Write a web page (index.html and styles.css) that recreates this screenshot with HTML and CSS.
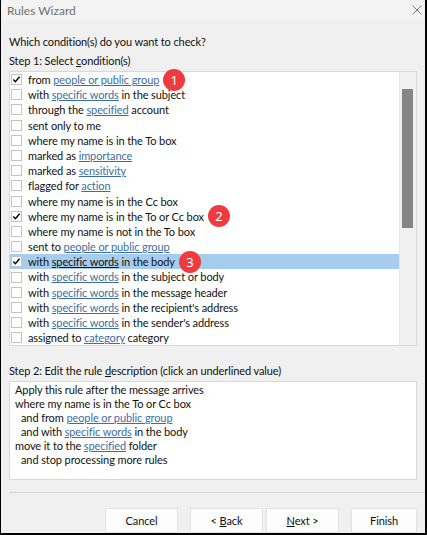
FILE: index.html
```html
<!DOCTYPE html>
<html lang="en">
<head>
    <meta charset="UTF-8">
    <meta name="viewport" content="width=device-width, initial-scale=1.0">
    <title>Rules Wizard</title>
    <link rel="stylesheet" href="styles.css">
</head>
<body>
    <div class="window">
        <div class="titlebar">
            <span class="title">Rules Wizard</span>
            <svg class="close" width="10" height="10" viewBox="0 0 10 10">
                <path d="M0.5 0.5 L9.5 9.5 M9.5 0.5 L0.5 9.5" stroke="#7a7a7a" stroke-width="1" fill="none"/>
            </svg>
        </div>

        <div class="content">
            <p class="label question">Which condition(s) do you want to check?</p>
            <p class="label step">Step 1: Select <u>c</u>ondition(s)</p>

            <div class="listbox">
                <ul class="conditions">
                    <li><span class="check on"></span><span class="text">from <a href="#">people or public group</a></span><span class="badge">1</span></li>
                    <li><span class="check"></span><span class="text">with <a href="#">specific words</a> in the subject</span></li>
                    <li><span class="check"></span><span class="text">through the <a href="#">specified</a> account</span></li>
                    <li><span class="check"></span><span class="text">sent only to me</span></li>
                    <li><span class="check"></span><span class="text">where my name is in the To box</span></li>
                    <li><span class="check"></span><span class="text">marked as <a href="#">importance</a></span></li>
                    <li><span class="check"></span><span class="text">marked as <a href="#">sensitivity</a></span></li>
                    <li><span class="check"></span><span class="text">flagged for <a href="#">action</a></span></li>
                    <li><span class="check"></span><span class="text">where my name is in the Cc box</span></li>
                    <li><span class="check on"></span><span class="text">where my name is in the To or Cc box</span><span class="badge">2</span></li>
                    <li><span class="check"></span><span class="text">where my name is not in the To box</span></li>
                    <li><span class="check"></span><span class="text">sent to <a href="#">people or public group</a></span></li>
                    <li class="selected"><span class="check on"></span><span class="text">with <a href="#">specific words</a> in the body</span><span class="badge">3</span></li>
                    <li><span class="check"></span><span class="text">with <a href="#">specific words</a> in the subject or body</span></li>
                    <li><span class="check"></span><span class="text">with <a href="#">specific words</a> in the message header</span></li>
                    <li><span class="check"></span><span class="text">with <a href="#">specific words</a> in the recipient's address</span></li>
                    <li><span class="check"></span><span class="text">with <a href="#">specific words</a> in the sender's address</span></li>
                    <li><span class="check"></span><span class="text">assigned to <a href="#">category</a> category</span></li>
                </ul>
                <div class="scrollbar"><div class="thumb"></div></div>
            </div>

            <p class="label step2">Step 2: Edit the rule <u>d</u>escription (click an underlined value)</p>

            <div class="description">
                <div>Apply this rule after the message arrives</div>
                <div>where my name is in the To or Cc box</div>
                <div class="indent">and from <a href="#">people or public group</a></div>
                <div class="indent">and with <a href="#">specific words</a> in the body</div>
                <div>move it to the <a href="#">specified</a> folder</div>
                <div class="indent">and stop processing more rules</div>
            </div>

            <div class="separator"></div>

            <div class="buttons">
                <button class="cancel">Cancel</button>
                <button class="back">&lt; <u>B</u>ack</button>
                <button class="next"><u>N</u>ext &gt;</button>
                <button class="finish">Finish</button>
            </div>
        </div>
    </div>
</body>
</html>
```

FILE: styles.css
```css
body {
    margin: 0;
    font-family: Lato, "Noto Sans", sans-serif;
    font-size: 11px;
    letter-spacing: -0.1px;
    color: #111;
}

.window {
    width: 427px;
    height: 535px;
    box-sizing: border-box;
    background-color: #f0f0f0;
    border-left: 1px solid #000;
    border-right: 2px solid #000;
    border-bottom: 2px solid #000;
    display: flex;
    flex-direction: column;
}

.titlebar {
    height: 20px;
    display: flex;
    align-items: center;
    justify-content: space-between;
    padding: 0 3px 0 6px;
    background-color: #f3f3f3;
}

.title {
    color: #707070;
    font-size: 12px;
    letter-spacing: 0;
}

.content {
    flex: 1;
    padding: 0 8px;
    display: flex;
    flex-direction: column;
}

.label {
    margin: 0;
    line-height: 16px;
}

.question {
    margin-top: 14px;
}

.step {
    margin-top: 3px;
}

/* condition list */
.listbox {
    margin-top: 2px;
    height: 275px;
    box-sizing: border-box;
    background-color: white;
    border: 1px solid #d9d9d9;
    display: flex;
}

.conditions {
    flex: 1;
    list-style: none;
    margin: 0;
    padding: 0;
}

.conditions li {
    height: 15.2px;
    line-height: 15.2px;
    display: flex;
    align-items: center;
    padding-left: 1px;
    white-space: nowrap;
}

.conditions li.selected {
    background-color: #a6cdee;
}

.conditions li.selected a {
    color: #111;
}

a {
    color: #3b6ea8;
    text-decoration: underline;
}

.check {
    width: 11px;
    height: 11px;
    box-sizing: border-box;
    border: 1px solid #c4c4c4;
    background-color: white;
    margin-right: 6px;
    flex-shrink: 0;
}

.check.on {
    background: white url("data:image/svg+xml,%3Csvg xmlns='http://www.w3.org/2000/svg' width='9' height='9' viewBox='0 0 9 9'%3E%3Cpath d='M1.3 4.6 L3.4 6.7 L7.6 1.8' stroke='%23000' stroke-width='1.4' fill='none'/%3E%3C/svg%3E") no-repeat center;
}

.badge {
    width: 22px;
    height: 22px;
    margin: -4px 0 -4px 4px;
    border-radius: 50%;
    background-color: #ef3b3f;
    color: white;
    font-family: "Noto Sans", sans-serif;
    font-size: 13px;
    letter-spacing: 0;
    line-height: 22px;
    text-align: center;
    flex-shrink: 0;
}

.scrollbar {
    width: 17px;
    background-color: #f0f0f0;
    border-left: 1px solid #e6e6e6;
    box-sizing: border-box;
    padding: 17px 3px 0 2px;
}

.thumb {
    height: 139px;
    background-color: #858585;
}

/* rule description */
.step2 {
    margin-top: 17px;
}

.description {
    margin-top: 2px;
    height: 99px;
    box-sizing: border-box;
    background-color: white;
    border: 1px solid #d9d9d9;
    padding: 1px 5px;
    line-height: 14px;
}

.description .indent {
    padding-left: 6px;
}

.separator {
    margin: 12px -8px 0 0;
    border-top: 1px solid #d4d4d4;
}

.buttons {
    margin-top: 15px;
    display: flex;
    justify-content: flex-end;
}

button {
    width: 73px;
    height: 25px;
    font-family: inherit;
    font-size: 11px;
    letter-spacing: inherit;
    color: #111;
    background-color: #fdfdfd;
    border: 1px solid #e3e3e3;
    border-radius: 0;
    padding: 0;
}

.back {
    margin-left: 12px;
}

.next {
    margin-left: 3px;
}

.finish {
    margin-left: 12px;
    width: 66px;
}
```
